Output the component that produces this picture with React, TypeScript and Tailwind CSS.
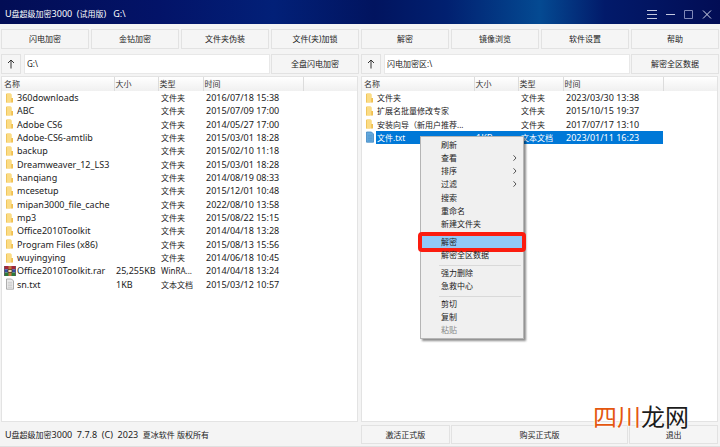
import { useState } from "react";
import type { ReactNode } from "react";

type Entry = {
  icon: "folder" | "rar" | "text";
  name: string;
  size: string;
  type: string;
  time: string;
};

const folder = (name: string, time: string): Entry => ({
  icon: "folder",
  name,
  size: "",
  type: "文件夹",
  time,
});

const driveFiles: Entry[] = [
  folder("360downloads", "2016/07/18 15:38"),
  folder("ABC", "2015/07/09 17:00"),
  folder("Adobe CS6", "2014/05/27 17:00"),
  folder("Adobe-CS6-amtlib", "2015/03/01 18:28"),
  folder("backup", "2015/02/10 11:18"),
  folder("Dreamweaver_12_LS3", "2015/03/01 18:28"),
  folder("hanqiang", "2014/08/19 08:33"),
  folder("mcesetup", "2015/12/01 10:48"),
  folder("mipan3000_file_cache", "2022/08/10 13:58"),
  folder("mp3", "2015/08/22 15:15"),
  folder("Office2010Toolkit", "2014/04/18 13:28"),
  folder("Program Files (x86)", "2015/08/13 15:56"),
  folder("wuyingying", "2014/06/18 10:45"),
  { icon: "rar", name: "Office2010Toolkit.rar", size: "25,255KB", type: "WinRA...", time: "2014/04/18 13:24" },
  { icon: "text", name: "sn.txt", size: "1KB", type: "文本文档", time: "2015/03/12 10:57" },
];

const vaultFiles: Entry[] = [
  folder("文件夹", "2023/03/30 13:38"),
  folder("扩展名批量修改专家", "2015/10/15 19:37"),
  folder("安装向导（新用户推荐...", "2017/07/17 13:10"),
  { icon: "text", name: "文件.txt", size: "1KB", type: "文本文档", time: "2023/01/11 16:23" },
];

const toolbar = [
  "闪电加密",
  "金钻加密",
  "文件夹伪装",
  "文件(夹)加锁",
  "解密",
  "镜像浏览",
  "软件设置",
  "帮助",
];

const menuGroups = [
  { height: "h-[93px]", items: ["刷新", "查看", "排序", "过滤", "搜索", "重命名", "新建文件夹"] },
  { height: "h-[27px]", items: ["解密", "解密全区数据"] },
  { height: "h-[27px]", items: ["强力删除", "急救中心"] },
  { height: "h-[40px]", items: ["剪切", "复制", "粘贴"] },
];

const submenus = ["查看", "排序", "过滤"];

function FileIcon({ icon, selected }: { icon: Entry["icon"]; selected: boolean }) {
  if (icon === "folder") {
    return (
      <svg viewBox="0 0 12 12" className="h-3 w-3 shrink-0">
        <path d="M2.5 1.5h4v9h-4z" fill="#f5cf68" />
        <path d="M2.5 1.5h4.3l1 1v8H2.5z" fill="#fbdc85" />
        <path d="M7.2 6h1.8v4.6H7.2z" fill="#f0c050" />
        <path d="M2.5 2v8.5" stroke="#eebf4c" strokeWidth="0.8" />
      </svg>
    );
  }
  if (icon === "rar") {
    return (
      <svg viewBox="0 0 12 12" className="h-3 w-3 shrink-0">
        <path d="M0.5 1h11v3.3H0.5z" fill="#a3263a" />
        <path d="M0.5 4.3h11v3.2H0.5z" fill="#314fa8" />
        <path d="M0.5 7.5h11v3.5H0.5z" fill="#2c7a3a" />
        <path d="M4.5 1h3v10h-3z" fill="#c2763a" />
        <path d="M4 4.5h4v3H4z" fill="#e9dcbc" stroke="#5c3414" strokeWidth="0.8" />
        <path d="M0.5 1v10M11.5 1v10" stroke="#3b2030" strokeWidth="0.6" />
      </svg>
    );
  }
  return (
    <svg viewBox="0 0 12 12" className="h-3 w-3 shrink-0">
      <path
        d="M2.5 1h5l2 2v8.2h-7z"
        fill={selected ? "#64a9dd" : "#ececec"}
        stroke={selected ? "#3f88c4" : "#9c9c9c"}
        strokeWidth="0.8"
      />
      <path
        d="M3.8 4.3h4.4M3.8 6h4.4M3.8 7.7h4.4M3.8 9.3h4.4"
        stroke={selected ? "#4a92cb" : "#b5b5b5"}
        strokeWidth="0.6"
      />
    </svg>
  );
}

function Button({ children, className = "", label }: { children: ReactNode; className?: string; label?: string }) {
  return (
    <button
      type="button"
      aria-label={label}
      className={`flex items-center justify-center border border-[#e2e2e2] bg-[#f5f5f5] hover:bg-white ${className}`}
    >
      {children}
    </button>
  );
}

function PathBar({ label, initial, action }: { label: string; initial: string; action: string }) {
  const [path, setPath] = useState(initial);

  return (
    <div className="grid h-5 min-w-0 grid-cols-[20px_minmax(0,1fr)_88px]">
      <Button label="上一级">
        <svg viewBox="0 0 12 12" className="h-3 w-3" fill="none" stroke="#333" strokeWidth="1">
          <path d="M6 10.5V2M3 5l3-3 3 3" />
        </svg>
      </Button>
      <input
        aria-label={label}
        value={path}
        onChange={(e) => setPath(e.target.value)}
        className="mr-px ml-[3px] min-w-0 border border-[#e8e8e8] bg-white px-0.5 outline-none"
      />
      <Button>{action}</Button>
    </div>
  );
}

function FileTable({
  files,
  height,
  nameSize,
  selected,
}: {
  files: Entry[];
  height: string;
  nameSize: string;
  selected?: string;
}) {
  return (
    <table className={`w-full table-fixed border-collapse text-left ${height}`}>
      <colgroup>
        <col className="w-[112px]" />
        <col className="w-[44px]" />
        <col className="w-[45px]" />
        <col className="w-[100px]" />
        <col />
      </colgroup>
      <thead>
        <tr className="h-[14px] bg-linear-to-b from-white to-[#f0f0f0] text-[#333]">
          {["名称", "大小", "类型", "时间"].map((title) => (
            <th key={title} className="border-r border-[#dcdcdc] py-0 pl-px font-normal first:pl-0.5">
              {title}
            </th>
          ))}
          <td />
        </tr>
      </thead>
      <tbody className="whitespace-nowrap">
        {files.map((file) => {
          const active = file.name === selected;
          const cell = active ? "bg-[#0078d7] text-white" : "";
          return (
            <tr key={file.name}>
              <td className="p-0">
                <div className="flex h-full items-center pl-0.5">
                  <FileIcon icon={file.icon} selected={active} />
                  <span className={`flex-1 pl-px leading-[13px] ${nameSize} ${cell}`}>{file.name}</span>
                </div>
              </td>
              <td className={`p-0 pl-0.5 text-[9px] leading-[13px] ${cell}`}>{file.size}</td>
              <td className={`p-0 pl-[3px] leading-[13px] ${cell}`}>{file.type}</td>
              <td className={`p-0 pl-[3px] text-[9px] leading-[13px] ${cell}`}>{file.time}</td>
              <td />
            </tr>
          );
        })}
      </tbody>
    </table>
  );
}

function ContextMenu() {
  return (
    <div
      role="menu"
      className="absolute top-[59px] left-[58px] w-[104px] border border-[#b5b5b5] bg-[#f0f0f0] py-px text-[#222] shadow-[2px_2px_2px_rgba(0,0,0,0.45)]"
    >
      {menuGroups.map((group, index) => (
        <div key={group.items[0]}>
          {index > 0 && <div className="mr-0.5 ml-[18px] h-1 border-b border-[#d9d9d9]" />}
          <div className={`grid auto-rows-fr ${group.height}`}>
            {group.items.map((item) => (
              <button
                key={item}
                type="button"
                role="menuitem"
                disabled={item === "粘贴"}
                className={`relative flex items-center justify-between pr-1 pl-5 leading-3 disabled:text-[#888] ${
                  item === "解密" ? "bg-[#91c9f7]" : ""
                }`}
              >
                {item}
                {submenus.includes(item) && (
                  <svg viewBox="0 0 8 8" className="h-2 w-2" fill="none" stroke="#444" strokeWidth="0.9">
                    <path d="M2.5 1.3 5 4 2.5 6.7" />
                  </svg>
                )}
                {/* marker round the decrypt command */}
                {item === "解密" && (
                  <span className="absolute -inset-x-[3px] -inset-y-[3px] rounded-sm border-4 border-[#fb1c0f]" />
                )}
              </button>
            ))}
          </div>
        </div>
      ))}
    </div>
  );
}

export default function App() {
  return (
    <div className="flex min-h-screen flex-col bg-[#f4f4f4] font-['Noto_Sans','Noto_Sans_CJK_SC',sans-serif] text-[8px] text-[#222]">
      {/* title bar */}
      <header className="flex h-6 items-center justify-between bg-[linear-gradient(90deg,#020d55_0%,#031368_22%,#022078_38%,#01145f_52%,#012070_62%,#044a92_75%,#021a6a_84%,#020d55_100%)] pr-2 pl-[5px] text-white">
        <h1 className="pt-1 text-[9px] whitespace-pre">
          U<span className="text-[8px]">盘超级加密</span>3000  (<span className="text-[8px]">试用版</span>)   G:\
        </h1>
        <div className="flex gap-1.5 pt-1">
          <button type="button" aria-label="菜单">
            <svg viewBox="0 0 12 12" className="h-3 w-3" stroke="#c4c9df" strokeWidth="1">
              <path d="M1 2.5h10M1 6.5h10M1 10.5h10" />
            </svg>
          </button>
          <button type="button" aria-label="最小化">
            <svg viewBox="0 0 12 12" className="h-3 w-3" stroke="#c4c9df" strokeWidth="1">
              <path d="M2 6.5h9" />
            </svg>
          </button>
          <button type="button" aria-label="最大化">
            <svg viewBox="0 0 12 12" className="h-3 w-3" fill="none" stroke="#8089b8" strokeWidth="1">
              <path d="M2.5 2.5h8v8h-8z" />
            </svg>
          </button>
          <button type="button" aria-label="关闭">
            <svg viewBox="0 0 12 12" className="h-3 w-3" stroke="#d5d9ea" strokeWidth="1">
              <path d="m3 2.5 8 8m0-8-8 8" />
            </svg>
          </button>
        </div>
      </header>

      <nav className="mt-[5px] grid h-5 grid-cols-8 gap-0.5 px-px">
        {toolbar.map((item) => (
          <Button key={item}>{item}</Button>
        ))}
      </nav>

      <div className="mt-[5px] grid grid-cols-2 gap-0.5 px-px">
        <PathBar label="驱动器路径" initial="G:\" action="全盘闪电加密" />
        <PathBar label="加密区路径" initial="闪电加密区:\" action="解密全区数据" />
      </div>

      <main className="mt-0.5 grid flex-1 grid-cols-2 gap-[3px] pr-0.5 pl-px">
        <section className="border border-[#e3e3e3] bg-white">
          <FileTable files={driveFiles} height="h-[214px]" nameSize="text-[9px]" />
        </section>
        <section className="relative border border-[#e3e3e3] bg-white">
          <FileTable files={vaultFiles} height="h-[67px]" nameSize="text-[8px]" selected="文件.txt" />
          <ContextMenu />
        </section>
      </main>

      <footer className="relative grid grid-cols-2 gap-[3px] border-b border-[#e0e0e0] pt-[3px] pr-0.5 pb-0.5 pl-px">
        <p className="flex items-center pl-1 text-[9px] whitespace-pre">
          U<span className="text-[8px]">盘超级加密</span>3000  7.7.8  (C)  2023  <span className="text-[8px]">夏冰软件 版权所有</span>
        </p>
        <div className="grid h-[19px] grid-cols-[1fr_2fr_1fr] gap-px">
          <Button>激活正式版</Button>
          <Button>购买正式版</Button>
          <Button>退出</Button>
        </div>
        <p className="pointer-events-none absolute right-[31px] bottom-[17px] text-[24px] leading-6 text-[#1c1c1c] [text-shadow:0_0_2px_white,0_0_2px_white,0_0_3px_white]">
          <span className="text-[#e4570f]">四川</span>龙网
        </p>
      </footer>
    </div>
  );
}
